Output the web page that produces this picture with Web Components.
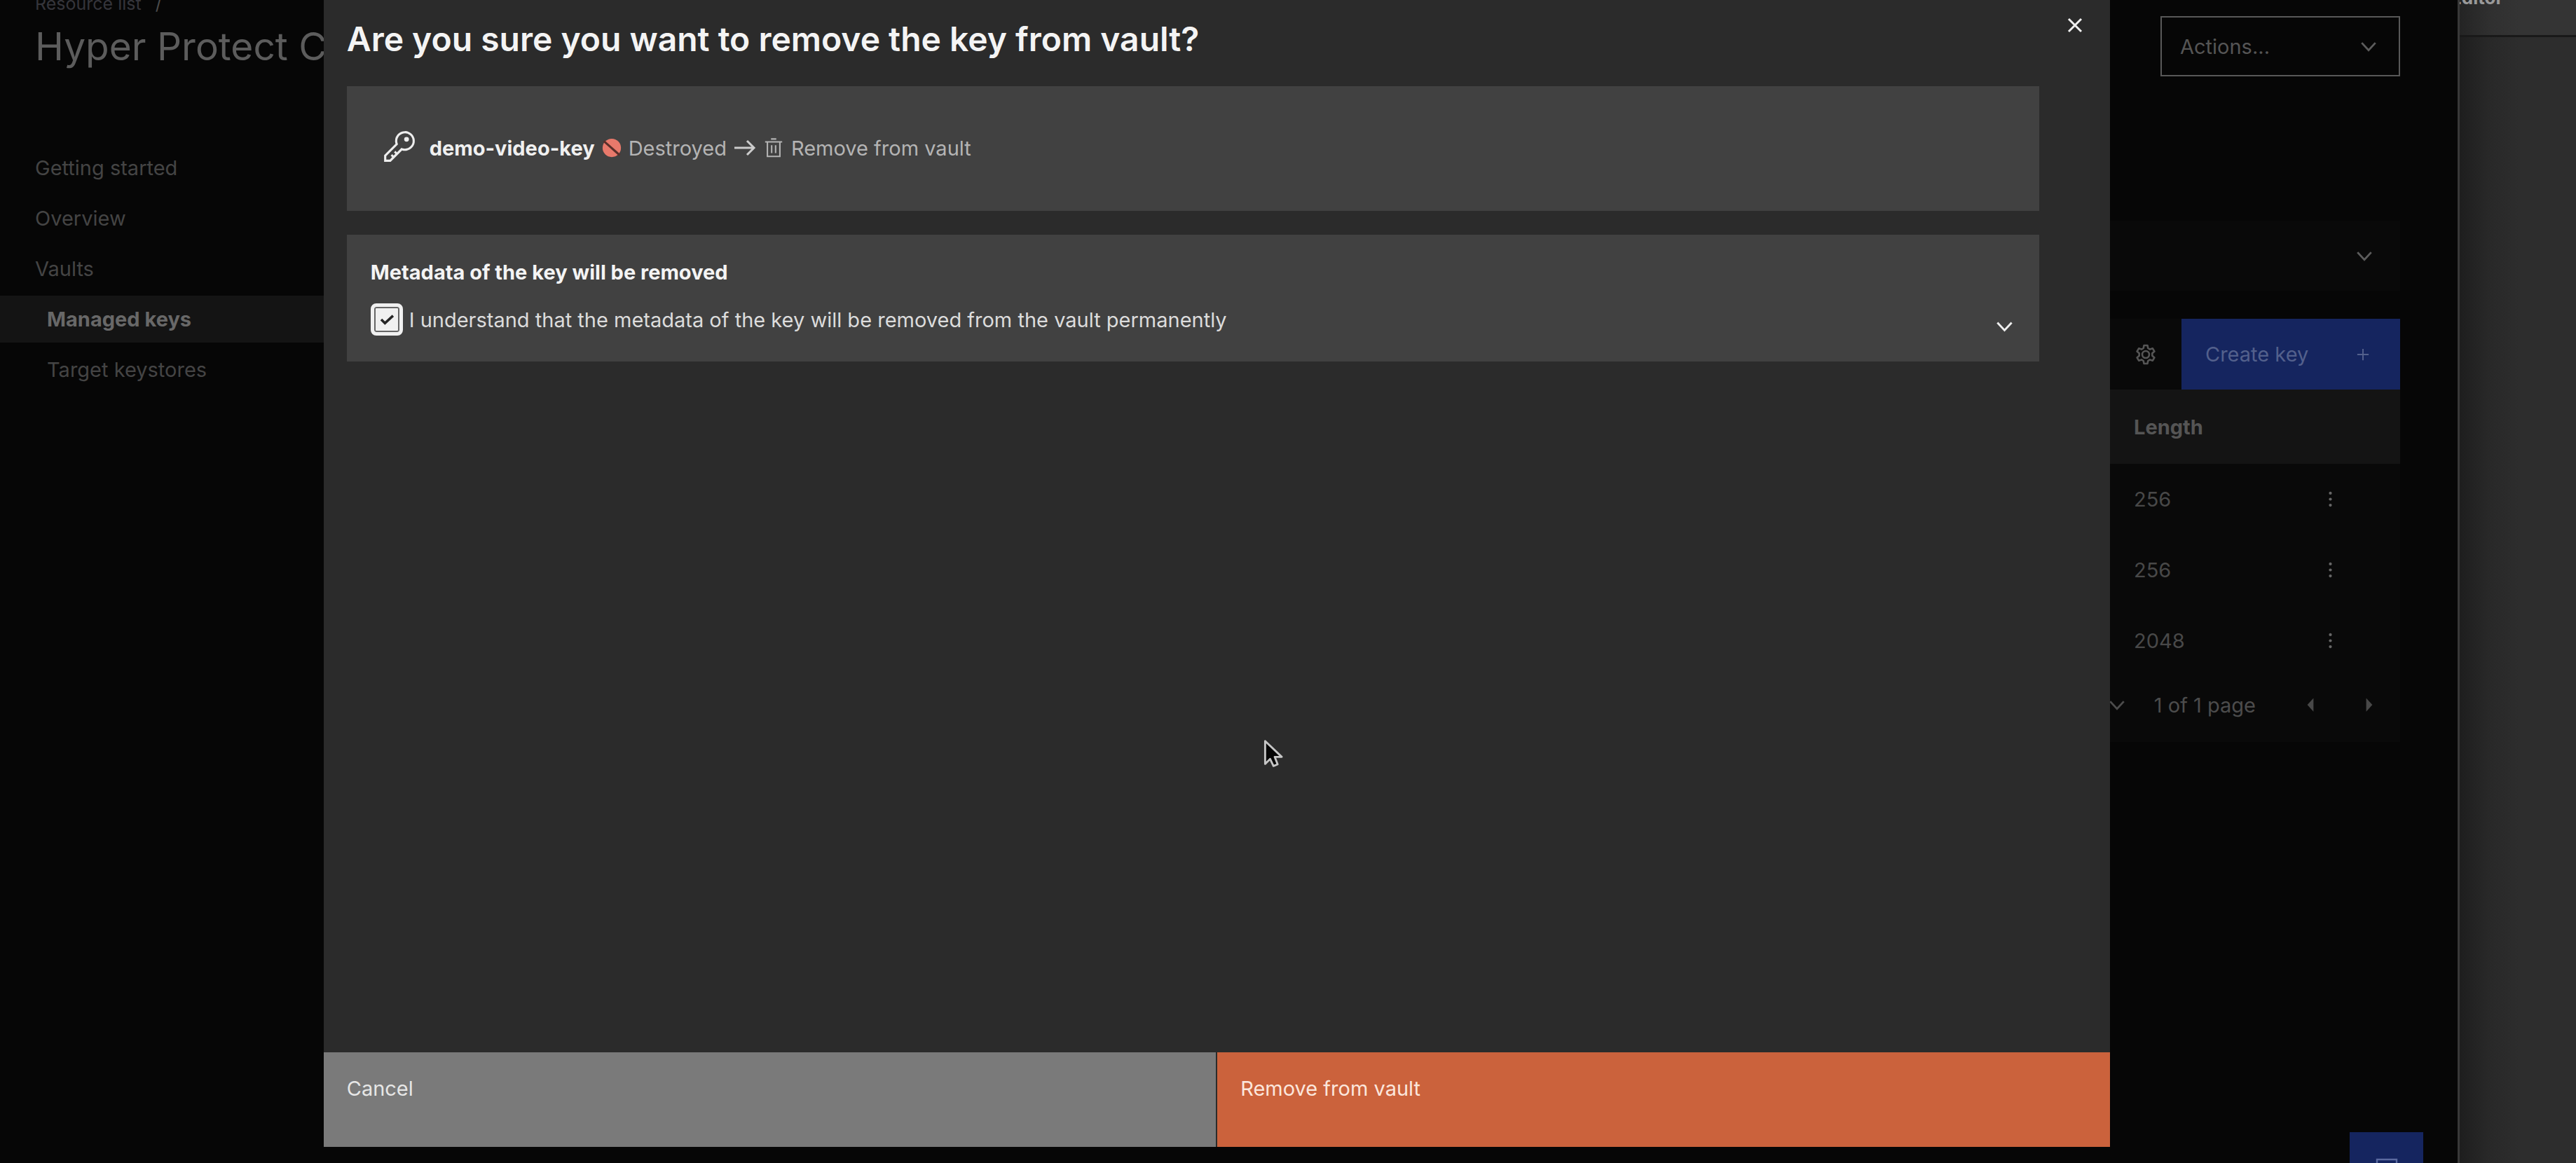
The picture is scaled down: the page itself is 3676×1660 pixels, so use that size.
<!DOCTYPE html>
<html lang="en">
<head>
<meta charset="utf-8">
<title>Managed keys</title>
<style>
  html, body { margin: 0; height: 100%; background: #060606; }
  body { font-family: Inter, "Liberation Sans", sans-serif; font-size: 29px; color: #4c4c4c; overflow: hidden; }
</style>
</head>
<body>
<console-app></console-app>
<script>
const define = (name, html) => customElements.define(name, class extends HTMLElement {
  constructor() {
    super();
    this.attachShadow({ mode: 'open' }).innerHTML = html;
  }
});

/* Icons: <ui-icon name="..."> sized by --size */
const ICONS = {
  chevron: '<path d="M4 10l12 13 12-13" fill="none" stroke="currentColor" stroke-width="3.500"/>',
  close: '<path d="M7 7l18 18M25 7L7 25" fill="none" stroke="currentColor" stroke-width="3"/>',
  plus: '<path d="M16 6v20M6 16h20" fill="none" stroke="currentColor" stroke-width="2.400"/>',
  arrow: '<path d="M1 16h28M19 6l10 10-10 10" fill="none" stroke="currentColor" stroke-width="3"/>',
  trash: '<path d="M3 7h26M6.500 7v22h19V7M12 2.500h8M13 12v12M19 12v12" fill="none" stroke="currentColor" stroke-width="2.200"/>',
  key: '<path d="M21 2a9 9 0 0 0-9 9 8.800 8.800 0 0 0 .4 2.600L2 24v6h6l10.400-10.400A9 9 0 1 0 21 2zm0 16a7.200 7.200 0 0 1-2-.3l-1.200-.4-.9.900-3.200 3.200L12.400 20 11 21.400l1.300 1.300-1.600 1.600L9.400 23 8 24.400l1.300 1.300L7.200 28H4v-3.200l9.800-9.800.9-.9-.4-1.200A7 7 0 1 1 21 18z" fill="currentColor"/><circle cx="22.500" cy="9.500" r="2.200" fill="currentColor"/>',
  destroyed: '<circle cx="16" cy="16" r="15" fill="#e8796b"/><path d="M3 5l26 23" stroke="#5a2f2a" stroke-width="3.500"/>',
  gear: '<path d="M13.500 3h5l.8 4 2.700 1.600 3.900-1.300 2.500 4.300-3.100 2.700v3.400l3.100 2.700-2.500 4.300-3.900-1.300-2.700 1.600-.8 4h-5l-.8-4-2.700-1.600-3.900 1.300-2.500-4.300 3.100-2.700v-3.400l-3.100-2.700 2.500-4.300 3.900 1.300L12.700 7z" fill="none" stroke="currentColor" stroke-width="2.600" stroke-linejoin="round"/><circle cx="16" cy="16" r="5" fill="none" stroke="currentColor" stroke-width="2.600"/>',
  dots: '<g fill="currentColor"><circle cx="16" cy="5" r="2.700"/><circle cx="16" cy="16" r="2.700"/><circle cx="16" cy="27" r="2.700"/></g>',
  left: '<path d="M21 5v22l-10-11z" fill="currentColor"/>',
  right: '<path d="M11 5v22l10-11z" fill="currentColor"/>',
  chat: '<path d="M2 32V3h28v29" fill="none" stroke="currentColor" stroke-width="2.400"/><path d="M9 10h14" stroke="currentColor" stroke-width="2.400"/>',
  pointer: '<path d="M2 1.500V29l6-6 4 8.500 5-2-3.500-9H22z" fill="#050505" stroke="#c6c6c6" stroke-width="2.400" stroke-linejoin="round"/>'
};
customElements.define('ui-icon', class extends HTMLElement {
  constructor() {
    super();
    this.attachShadow({ mode: 'open' }).innerHTML = `
      <style>
        :host { display: inline-flex; flex: none; width: var(--size, 24px); height: var(--size, 24px); }
        svg { width: 100%; height: 100%; display: block; overflow: visible; }
      </style>
      <svg viewBox="0 0 32 32" aria-hidden="true">${ICONS[this.getAttribute('name')]}</svg>`;
  }
});

define('page-header', `
  <style>
    :host { display: block; margin-top: -12px; padding: 0 82px 0 50px; }
    nav { display: flex; gap: 20px; height: 35px; line-height: 35px; font-size: 25px; }
    a { color: #35353b; text-decoration: none; }
    .row { display: flex; justify-content: space-between; align-items: center; }
    h1 { margin: 0; font-size: 55px; line-height: 72px; font-weight: 400; color: #5c5c5c; }
    .actions { display: flex; align-items: center; box-sizing: border-box; width: 342px; height: 86px; border: 2px solid #585858; position: relative; }
    select { appearance: none; width: 100%; height: 100%; border: 0; background: none; color: #555; font: inherit; padding: 0 26px; }
    ui-icon { --size: 26px; position: absolute; right: 30px; pointer-events: none; color: #5c5c5c; }
  </style>
  <nav aria-label="Breadcrumb"><a href="#">Resource list</a><span>/</span></nav>
  <div class="row">
    <h1>Hyper Protect C</h1>
    <div class="actions"><select aria-label="Actions"><option>Actions...</option></select><ui-icon name="chevron"></ui-icon></div>
  </div>`);

define('side-nav', `
  <style>
    :host { display: flex; flex-direction: column; gap: 5px; flex: none; width: 505px; padding-top: 97px; }
    ::slotted(a) { display: block; padding-left: 50px; line-height: 67px; color: #444; text-decoration: none; }
    ::slotted(a.sub) { padding-left: 67px; }
    ::slotted(a[aria-current]) { background: #141414; color: #686868; font-weight: 700; }
  </style>
  <slot></slot>`);

define('keys-panel', `
  <style>
    :host { display: block; flex: 1; min-width: 0; padding: 206px 82px 0 0; }
    .filter { display: flex; align-items: center; justify-content: flex-end; height: 100px; padding-right: 38px; background: #090909; color: #5c5c5c; --size: 26px; }
    .tools { display: flex; justify-content: flex-end; align-items: center; gap: 35px; margin-top: 40px; height: 101px; background: #090909; color: #555; }
    .tools button.icon { border: 0; background: none; padding: 0; color: inherit; display: flex; --size: 32px; }
    .create { display: flex; align-items: center; justify-content: space-between; width: 312px; height: 101px; padding: 0 40px 0 34px; border: 0; background: #15255f; color: #53608c; font: inherit; --size: 26px; }
    table { width: 100%; border-collapse: collapse; table-layout: fixed; background: #090909; color: #484848; }
    th, td { height: 101px; padding: 0; text-align: left; font-weight: 400; }
    thead th { background: #141414; font-weight: 700; color: #555; height: 106px; }
    .len { width: 264px; }
    .act { width: 116px; }
    td button { border: 0; background: none; padding: 0 0 0 4px; color: #666; display: flex; --size: 25px; }
    .pages { display: flex; align-items: center; justify-content: flex-end; height: 82px; padding: 0 30px 12px 0; background: #090909; --size: 26px; }
    .pages button { border: 0; background: none; padding: 0; color: #484848; display: flex; --size: 28px; }
    .count { margin: 0 64px 0 40px; }
    .next { margin-left: 56px; }
  </style>
  <div class="filter"><ui-icon name="chevron"></ui-icon></div>
  <div class="tools">
    <button class="icon" aria-label="Settings"><ui-icon name="gear"></ui-icon></button>
    <button class="create">Create key<ui-icon name="plus"></ui-icon></button>
  </div>
  <table>
    <thead><tr><th></th><th class="len">Length</th><th class="act"></th></tr></thead>
    <tbody>
      <tr><td></td><td>256</td><td><button aria-label="Row menu"><ui-icon name="dots"></ui-icon></button></td></tr>
      <tr><td></td><td>256</td><td><button aria-label="Row menu"><ui-icon name="dots"></ui-icon></button></td></tr>
      <tr><td></td><td>2048</td><td><button aria-label="Row menu"><ui-icon name="dots"></ui-icon></button></td></tr>
    </tbody>
  </table>
  <div class="pages">
    <ui-icon name="chevron"></ui-icon><span class="count">1 of 1 page</span>
    <button aria-label="Previous page"><ui-icon name="left"></ui-icon></button>
    <button class="next" aria-label="Next page"><ui-icon name="right"></ui-icon></button>
  </div>`);

define('editor-pane', `
  <style>
    :host { display: flex; flex-direction: column; flex: none; width: 166px; border-left: 3px solid #383838;
      background: linear-gradient(90deg, #1e1e1e, #282828 40px, #2d2d2d 85px); }
    .tab { height: 50px; border-bottom: 3px solid #191919; line-height: 36px; font-size: 26px; font-weight: 700; color: #999; overflow: hidden;
      background: linear-gradient(90deg, #242424, #303030 45px, #343434 85px); }
    .tab span { display: block; margin-top: -21px; margin-left: -13px; }
  </style>
  <div class="tab"><span>Editor</span></div>`);

define('info-card', `
  <style>
    :host { display: block; background: #414141; box-sizing: border-box; }
  </style>
  <slot></slot>`);

define('key-transition', `
  <style>
    :host { display: flex; align-items: center; height: 176px; padding: 0 50px 2px; color: #b4b4b4; }
    strong { margin: 0 10px 0 18px; color: #f0f0f0; }
    .key { --size: 50px; color: #eee; margin-bottom: 5px; }
    .from { margin: 0 10px; }
    .to { margin-left: 10px; }
    .arrow { color: #ccc; margin-right: 10px; }
  </style>
  <ui-icon class="key" name="key"></ui-icon>
  <strong>demo-video-key</strong>
  <ui-icon name="destroyed" style="--size:28px"></ui-icon>
  <span class="from">Destroyed</span>
  <ui-icon class="arrow" name="arrow" style="--size:32px"></ui-icon>
  <ui-icon name="trash" style="--size:30px"></ui-icon>
  <span class="to">Remove from vault</span>`);

define('confirm-metadata', `
  <style>
    :host { display: flex; justify-content: space-between; align-items: flex-end; padding: 34px 36px 37px 34px; color: #dcdcdc; }
    h3 { margin: 0 0 24px; font-size: 29px; line-height: 40px; color: #f4f4f4; }
    .row { display: flex; align-items: center; gap: 9px; }
    input { appearance: none; display: block; box-sizing: border-box; width: 46px; height: 46px; margin: 0; border: 5px solid #f0f0f0; border-radius: 8px;
      background: #f0f0f0 url('data:image/svg+xml,<svg xmlns="http://www.w3.org/2000/svg" viewBox="0 0 36 36"><path d="M9 18l6 6 13-12" fill="none" stroke="%23262626" stroke-width="4"/></svg>') center / 32px; box-shadow: inset 0 0 0 2px #666; }
    button { border: 0; background: none; padding: 0; color: #eee; display: flex; --size: 27px; }
  </style>
  <div>
    <h3>Metadata of the key will be removed</h3>
    <div class="row"><input type="checkbox" id="ok" checked><label for="ok">I understand that the metadata of the key will be removed from the vault permanently</label></div>
  </div>
  <button aria-label="Show details"><ui-icon name="chevron"></ui-icon></button>`);

define('confirm-modal', `
  <style>
    :host { display: flex; flex-direction: column; position: fixed; inset: 0 18.1% 23px 12.56%; background: #2b2b2b; }
    header { display: flex; justify-content: space-between; height: 123px; padding: 0 34px 0 33px; }
    h2 { margin: 24px 0 0; font-size: 48px; line-height: 64px; font-weight: 600; color: #f4f4f4; }
    header button { border: 0; background: none; padding: 20px 0 0; color: #f0f0f0; display: flex; --size: 32px; }
    main { flex: 1; display: flex; flex-direction: column; gap: 34px; padding: 0 101px 0 33px; }
    footer { display: flex; gap: 2px; height: 135px; }
    footer button { flex: 1; border: 0; display: flex; padding: 34px 33px; font: inherit; line-height: 36px; text-align: left; background: #7a7a7a; color: #e6e6e6; }
    footer .danger { background: #cb623c; color: #fbe6dc; }
  </style>
  <header><h2>Are you sure you want to remove the key from vault?</h2><button aria-label="Close"><ui-icon name="close"></ui-icon></button></header>
  <main><slot></slot></main>
  <footer><button>Cancel</button><button class="danger">Remove from vault</button></footer>`);

define('chat-launcher', `
  <style>
    :host { display: block; position: fixed; right: 218px; bottom: 0; }
    button { display: flex; justify-content: center; align-items: flex-end; width: 105px; height: 44px; overflow: hidden; border: 0; padding: 0; background: #15255f; color: #5b6aa0; --size: 32px; }
    ui-icon { margin-bottom: -24px; }
  </style>
  <button aria-label="Open chat"><ui-icon name="chat"></ui-icon></button>`);

define('mouse-pointer', `
  <style>:host { display: block; position: fixed; left: 1803px; top: 1056px; --size: 38px; }</style>
  <ui-icon name="pointer"></ui-icon>`);

define('console-app', `
  <style>
    :host { display: flex; height: 100vh; overflow: hidden; }
    .window { flex: 1; min-width: 0; overflow: hidden; display: flow-root; }
    .body { display: flex; }
  </style>
  <div class="window">
    <page-header></page-header>
    <div class="body">
      <side-nav>
        <a href="#">Getting started</a><a href="#">Overview</a><a href="#">Vaults</a>
        <a class="sub" href="#" aria-current="page">Managed keys</a><a class="sub" href="#">Target keystores</a>
      </side-nav>
      <keys-panel></keys-panel>
    </div>
  </div>
  <editor-pane></editor-pane>
  <confirm-modal>
    <info-card><key-transition></key-transition></info-card>
    <info-card><confirm-metadata></confirm-metadata></info-card>
  </confirm-modal>
  <chat-launcher></chat-launcher>
  <mouse-pointer></mouse-pointer>`);
</script>
</body>
</html>
